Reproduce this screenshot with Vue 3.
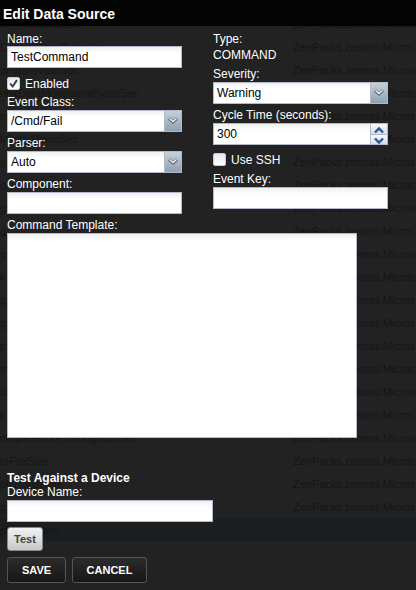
<script setup>
// rows of the grid that shows through behind the window
const names = [
  "",
  "emHitRatioBase",
  "CentralSegsBytesSec",
  "gFlushWaitsSec",
  "rinkDataMovementBytesSec",
  "rc",
  "kCopyRowsSec",
  "g",
  "g",
  "gT",
  "g",
  "g",
  "k",
  "g",
  "g",
  "p",
  "tn",
  "cl",
  "ti",
  "ckupRestoreThroughputSec",
  "taFileSize",
  "phTransRate",
  "g",
  "stCommand",
];
const ghostRows = names.map((name, i) => ({
  id: i,
  name,
  pack: i < 23 ? "ZenPacks.zenoss.Micros" : "",
}));
</script>

<template>
  <div class="dialog">
    <div class="ghost-band"></div>
    <div class="ghost-rows">
      <div v-for="row in ghostRows" :key="row.id" class="ghost-row">
        <span class="ghost-name">{{ row.name }}</span>
        <span class="ghost-pack">{{ row.pack }}</span>
      </div>
    </div>

    <div class="title">Edit Data Source</div>

    <div class="form">
      <div class="columns">
        <div class="col">
          <label class="lbl lbl-first">Name:</label>
          <input class="field" type="text" value="TestCommand" />
          <label class="check check-enabled">
            <span class="box">
              <svg viewBox="0 0 13 13" width="11" height="11">
                <path d="M2.5 6.5 L5.5 10 L10.5 2.5" fill="none" stroke="#2d3a4d" stroke-width="2.2" />
              </svg>
            </span>
            <span class="check-text">Enabled</span>
          </label>
          <label class="lbl">Event Class:</label>
          <div class="combo">
            <div class="combo-value">/Cmd/Fail</div>
            <div class="trigger">
              <svg viewBox="0 0 16 20" width="16" height="20">
                <path d="M4 7.5 L8 11 L12 7.5" fill="none" stroke="#5f6c79" stroke-width="3" />
                <path d="M4.5 7.5 L8 10.5 L11.5 7.5" fill="none" stroke="#eef2f5" stroke-width="1.4" />
              </svg>
            </div>
          </div>
          <label class="lbl">Parser:</label>
          <div class="combo">
            <div class="combo-value">Auto</div>
            <div class="trigger">
              <svg viewBox="0 0 16 20" width="16" height="20">
                <path d="M4 7.5 L8 11 L12 7.5" fill="none" stroke="#5f6c79" stroke-width="3" />
                <path d="M4.5 7.5 L8 10.5 L11.5 7.5" fill="none" stroke="#eef2f5" stroke-width="1.4" />
              </svg>
            </div>
          </div>
          <label class="lbl">Component:</label>
          <input class="field" type="text" />
        </div>

        <div class="col">
          <label class="lbl lbl-first">Type:</label>
          <div class="type-value">COMMAND</div>
          <label class="lbl">Severity:</label>
          <div class="combo">
            <div class="combo-value">Warning</div>
            <div class="trigger">
              <svg viewBox="0 0 16 20" width="16" height="20">
                <path d="M4 7.5 L8 11 L12 7.5" fill="none" stroke="#5f6c79" stroke-width="3" />
                <path d="M4.5 7.5 L8 10.5 L11.5 7.5" fill="none" stroke="#eef2f5" stroke-width="1.4" />
              </svg>
            </div>
          </div>
          <label class="lbl">Cycle Time (seconds):</label>
          <div class="combo">
            <div class="combo-value">300</div>
            <div class="spinner">
              <div class="spin">
                <svg viewBox="0 0 16 10" width="16" height="10">
                  <path d="M4 7.5 L8 3.5 L12 7.5" fill="none" stroke="#30558f" stroke-width="2.4" />
                </svg>
              </div>
              <div class="spin spin-down">
                <svg viewBox="0 0 16 10" width="16" height="10">
                  <path d="M4 2.5 L8 6.5 L12 2.5" fill="none" stroke="#30558f" stroke-width="2.4" />
                </svg>
              </div>
            </div>
          </div>
          <label class="check check-ssh">
            <span class="box"></span>
            <span class="check-text">Use SSH</span>
          </label>
          <label class="lbl">Event Key:</label>
          <input class="field" type="text" />
        </div>
      </div>

      <label class="lbl">Command Template:</label>
      <div class="template"></div>

      <div class="test-title">Test Against a Device</div>
      <label class="lbl">Device Name:</label>
      <input class="field device" type="text" />
      <button class="test-btn" type="button">Test</button>

      <div class="actions">
        <button class="dark-btn save" type="button">SAVE</button>
        <button class="dark-btn cancel" type="button">CANCEL</button>
      </div>
    </div>
  </div>
</template>

<style>
html,
body {
  margin: 0;
  background: #222;
}
</style>

<style scoped>
.dialog {
  position: relative;
  width: 416px;
  height: 590px;
  overflow: hidden;
  background: #222;
  color: #fff;
  font-family: "Liberation Sans", Arial, sans-serif;
  font-size: 12px;
}

/* BACKGROUND GRID */
.ghost-rows {
  position: absolute;
  top: -10px;
  left: 0;
  width: 416px;
  height: 600px;
  overflow: hidden;
}

.ghost-row {
  position: relative;
  height: 23px;
  line-height: 23px;
  font-size: 11px;
  color: #151515;
  white-space: nowrap;
}

.ghost-name {
  position: absolute;
  left: 0;
}

.ghost-pack {
  position: absolute;
  left: 293px;
  width: 123px;
  overflow: hidden;
}

.ghost-band {
  position: absolute;
  top: 518px;
  left: 0;
  width: 416px;
  height: 23px;
  background: #1a1e20;
}

/* HEADER */
.title {
  position: relative;
  height: 26px;
  line-height: 28px;
  padding-left: 3px;
  background: rgba(0, 0, 0, 0.88);
  font-size: 14px;
  font-weight: bold;
}

/* FORM */
.form {
  position: relative;
  padding: 0 7px;
}

.columns {
  display: flex;
  gap: 31px;
}

.col {
  width: 175px;
  display: flex;
  flex-direction: column;
  padding-top: 5px;
}

.lbl {
  display: block;
  height: 15px;
  line-height: 15px;
}

.lbl-first {
  line-height: 17px;
}

.field {
  box-sizing: border-box;
  display: block;
  width: 175px;
  height: 22px;
  margin: 0 0 4px;
  padding: 0 3px;
  border: 1px solid #b5b8c8;
  border-radius: 0;
  outline: none;
  background: linear-gradient(#eef0f1, #fff 6px);
  color: #000;
  font-family: inherit;
  font-size: 12px;
}

.check {
  display: flex;
  align-items: center;
  gap: 5px;
  height: 15px;
  line-height: 15px;
}

.check-text {
  padding-top: 2px;
}

.check-enabled {
  margin: 4px 0 4px;
}

.check-ssh {
  margin: 3px 0 5px;
}

.box {
  box-sizing: border-box;
  width: 13px;
  height: 13px;
  background: linear-gradient(#e4e8ef, #fff);
  border: 1px solid #c4ccd8;
  border-radius: 2px;
  display: flex;
}

.combo {
  box-sizing: border-box;
  display: flex;
  width: 175px;
  height: 22px;
  margin-bottom: 4px;
  border: 1px solid #b5b8c8;
  background: linear-gradient(#eef0f1, #fff 6px);
  color: #000;
}

.combo-value {
  flex: 1;
  line-height: 20px;
  padding-left: 3px;
}

.trigger {
  width: 16px;
  background: linear-gradient(#c6d0d9, #8fa2b4);
  border-left: 1px solid #b5b8c8;
}

.spinner {
  width: 16px;
  display: flex;
  flex-direction: column;
  border-left: 1px solid #b5b8c8;
}

.spin {
  flex: 1;
  background: linear-gradient(#f7f9fb, #d5deea);
  overflow: hidden;
}

.spin-down {
  border-top: 1px solid #b5b8c8;
}

.type-value {
  height: 17px;
  line-height: 19px;
  margin-bottom: 4px;
}

/* COMMAND TEMPLATE */
.template {
  box-sizing: border-box;
  width: 350px;
  height: 205px;
  border: 1px solid #b5b8c8;
  background: linear-gradient(#eef0f1, #fff 6px);
}

/* TEST AGAINST A DEVICE */
.test-title {
  margin-top: 33px;
  height: 14px;
  line-height: 14px;
  font-weight: bold;
}

.device {
  width: 206px;
  margin-bottom: 5px;
}

.test-btn {
  display: block;
  box-sizing: border-box;
  width: 36px;
  height: 24px;
  padding: 0;
  border: 1px solid #888;
  border-radius: 3px;
  background: linear-gradient(#f2f2f2, #c8c8c8);
  color: #444;
  font-family: inherit;
  font-size: 11px;
  font-weight: bold;
}

/* ACTIONS */
.actions {
  display: flex;
  gap: 6px;
  margin-top: 6px;
}

.dark-btn {
  box-sizing: border-box;
  height: 26px;
  padding: 0;
  border: 1px solid #555;
  border-radius: 3px;
  background: linear-gradient(#2c2c2c, #161616);
  color: #fff;
  font-family: inherit;
  font-size: 11px;
  font-weight: bold;
}

.save {
  width: 59px;
}

.cancel {
  width: 75px;
}
</style>
